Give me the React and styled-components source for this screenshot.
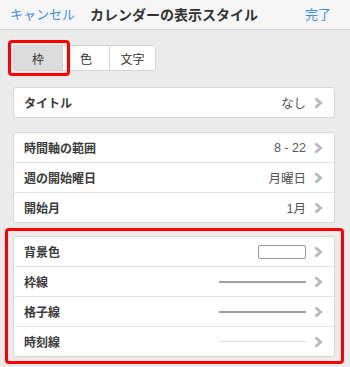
import React from "react";
import styled, { createGlobalStyle, css } from "styled-components";

const Global = createGlobalStyle`
  html, body { margin: 0; padding: 0; background: #ebebeb; }
  body { font-family: "Liberation Sans", "Noto Sans CJK JP", sans-serif; -webkit-font-smoothing: antialiased; }
`;

const marker = (t, r, b, l) => css`
  position: relative;
  &::after {
    content: "";
    position: absolute;
    top: -${t}px;
    right: -${r}px;
    bottom: -${b}px;
    left: -${l}px;
    border: 3px solid #ff0000;
    border-radius: 4px;
    pointer-events: none;
    z-index: 2;
  }
`;

const Page = styled.div`
  width: 350px;
  min-height: 367px;
  background: #ebebeb;
`;

const Header = styled.div`
  height: 29px;
  display: flex;
  align-items: center;
  padding: 0 19px 0 10px;
  background: #f6f6f6;
  border-bottom: 1px solid #d3d3d3;
`;

const NavButton = styled.span`
  color: #3b8ff0;
  font-size: 13px;
  line-height: 1;
`;

const Title = styled.span`
  flex: 1;
  margin-left: 15px;
  font-size: 14px;
  font-weight: 700;
  color: #333;
  line-height: 1;
`;

const Content = styled.div`
  padding: 15px 15px 0 13px;
  display: flex;
  flex-direction: column;
`;

const Segments = styled.div`
  display: flex;
  align-self: flex-start;
  height: 26px;
  border: 1px solid #d4d4d4;
  border-radius: 3px;
  background: #fff;
  box-sizing: border-box;
`;

const Segment = styled.div`
  width: ${(p) => p.$w}px;
  display: flex;
  align-items: center;
  justify-content: center;
  font-size: 12px;
  color: #333;
  box-sizing: border-box;
  background: ${(p) => (p.$active ? "#dcdcdc" : "#fff")};
  & + & { border-left: 1px solid #d4d4d4; }
  ${(p) => p.$marked && marker(6, 8, 6, 6)}
`;

const Card = styled.div`
  margin-top: ${(p) => p.$mt}px;
  background: #fff;
  border: 1px solid #d6d6d6;
  border-radius: 3px;
  ${(p) => p.$marked && marker(9, 10, 8, 9)}
`;

const Row = styled.div`
  height: 29px;
  display: flex;
  align-items: center;
  padding: 0 11px 0 10px;
  & + & { border-top: 1px solid #e2e2e2; }
`;

const Label = styled.span`
  flex: 1;
  font-size: 12px;
  font-weight: 700;
  color: #3a3a3a;
`;

const Value = styled.span`
  font-size: 12.5px;
  color: #555;
`;

const Swatch = styled.span`
  width: 48px;
  height: 14px;
  box-sizing: border-box;
  border: 1px solid #9a9a9a;
  border-radius: 2px;
  background: #fff;
`;

const LineSample = styled.span`
  width: 87px;
  height: ${(p) => p.$h}px;
  background: ${(p) => p.$c};
`;

const ChevronBox = styled.span`
  margin-left: 7px;
  display: flex;
  align-items: center;
`;

const Chevron = () => (
  <ChevronBox>
    <svg width="10" height="12" viewBox="0 0 10 12">
      <polyline points="2.5,1.5 7.5,6 2.5,10.5" fill="none" stroke="#bababa" strokeWidth="3" strokeLinejoin="miter" />
    </svg>
  </ChevronBox>
);

const Item = ({ label, children }) => (
  <Row>
    <Label>{label}</Label>
    {children}
    <Chevron />
  </Row>
);

export default function App() {
  return (
    <Page>
      <Global />
      <Header>
        <NavButton>キャンセル</NavButton>
        <Title>カレンダーの表示スタイル</Title>
        <NavButton>完了</NavButton>
      </Header>
      <Content>
        <Segments>
          <Segment $w={48} $active $marked>枠</Segment>
          <Segment $w={47}>色</Segment>
          <Segment $w={46}>文字</Segment>
        </Segments>
        <Card $mt={16}>
          <Item label="タイトル"><Value>なし</Value></Item>
        </Card>
        <Card $mt={14}>
          <Item label="時間軸の範囲"><Value>8 - 22</Value></Item>
          <Item label="週の開始曜日"><Value>月曜日</Value></Item>
          <Item label="開始月"><Value>1月</Value></Item>
        </Card>
        <Card $mt={13} $marked>
          <Item label="背景色"><Swatch /></Item>
          <Item label="枠線"><LineSample $h={2} $c="#9c9cab" /></Item>
          <Item label="格子線"><LineSample $h={2} $c="#9c9cab" /></Item>
          <Item label="時刻線"><LineSample $h={1} $c="#dcdcdc" /></Item>
        </Card>
      </Content>
    </Page>
  );
}
